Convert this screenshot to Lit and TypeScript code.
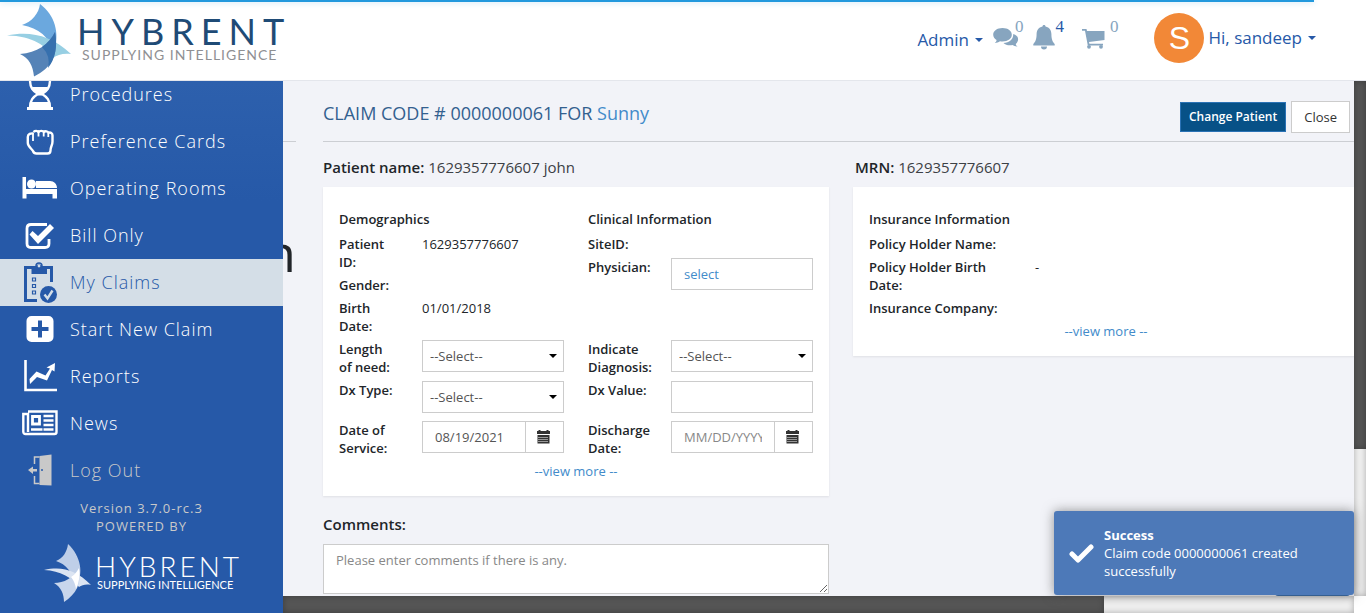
import { LitElement, html, css, svg, nothing } from "lit";
import { customElement, property } from "lit/decorators.js";
import { classMap } from "lit/directives/class-map.js";

const icons: Record<string, unknown> = {
  hourglass: svg`
    <path d="M7 2h26v3H7zM7 31h26v3H7z" fill="currentColor"/>
    <path d="M10 4c0 8 3 11 8 14c-5 3-8 6-8 14M30 4c0 8-3 11-8 14c5 3 8 6 8 14" fill="none" stroke="currentColor" stroke-width="2.400"/>
    <path d="M12 11h16c-1 3-3 5-6 6.500v2l-4 0v-2c-3-1.500-5-3.500-6-6.500zM11 26h18l2 6H9z" fill="currentColor"/>`,
  hand: svg`
    <path d="M13.500 9c1.500-1.500 4-1.500 5 0c1-1.500 4.500-1.500 5.500 0c1-1 4-1 4.500.8c2-.8 4 .4 4 2.700v6c0 4-2 5-2 9c0 2-1 3-3 3H16.500c-2 0-3-1-3.500-2.500c-1-2-5.200-4.500-5.200-8V14c0-3 3-4 5.700-3.500" fill="none" stroke="currentColor" stroke-width="2.400" stroke-linejoin="round"/>
    <path d="M13 10v8M18.500 9v4.500M23.700 9v4.500M28.300 10v4" fill="none" stroke="currentColor" stroke-width="1.800"/>`,
  bed: svg`
    <path d="M2.500 7h3.500v12h31v9.500h-4.500V24H6.500v4.500h-4zM16 11h14c4 0 7 3 7 7H16z" fill="currentColor"/>
    <circle cx="11.500" cy="14" r="4.500" fill="currentColor"/>`,
  check: svg`
    <path d="M27 7.500H11c-2.500 0-4 1.500-4 4v15c0 2.500 1.500 4 4 4h14c2.500 0 4-1.500 4-4V22" fill="none" stroke="currentColor" stroke-width="2.800"/>
    <path d="M9.500 17.500l3-3.500 5.500 5L30 7l4 4-16 16z" fill="currentColor"/>`,
  claims: svg`
    <path d="M31.500 20V5.500H5.500v33H17" fill="none" stroke="currentColor" stroke-width="3"/>
    <path d="M11.500 4h4.500a3.500 3.500 0 0 1 6 0h5v8H11.500z" fill="currentColor"/>
    <circle cx="19" cy="4" r="3" fill="none" stroke="currentColor" stroke-width="1.500"/>
    <circle cx="19" cy="4" r="1.400" fill="#d4dee7"/>
    <path d="M12.500 16h3v3h-3zM12.500 22.500h3v3h-3zM12.500 29h3v3h-3z" fill="none" stroke="currentColor" stroke-width="1.200"/>
    <circle cx="28.500" cy="32.500" r="8.500" fill="currentColor"/>
    <path d="M24.500 32.500l3 4 5-8" fill="none" stroke="#d4dee7" stroke-width="2.400"/>`,
  plus: svg`
    <path fill-rule="evenodd" d="M11.500 5h17a5 5 0 0 1 5 5v16a5 5 0 0 1-5 5h-17a5 5 0 0 1-5-5V10a5 5 0 0 1 5-5zM18 9.500V16h-6.500v4H18v6.500h4V20h6.500v-4H22V9.500z" fill="currentColor"/>`,
  chart: svg`
    <path d="M5.500 2v30H37" fill="none" stroke="currentColor" stroke-width="2.600"/>
    <path d="M9.500 21l7-7.500 9 4 4.500-7-3.500-1L35 5l-.500 8.500-2.500-1.500-5 10.500-10-3.500-7 7z" fill="currentColor"/>`,
  news: svg`
    <path d="M8 6.500h28.500V27a2 2 0 0 1-2 2H5.500a2.200 2.200 0 0 1-2.200-2V9H8v18" fill="none" stroke="currentColor" stroke-width="2.400"/>
    <path d="M12.500 11.500h7v7.500h-7z" fill="none" stroke="currentColor" stroke-width="2.800"/>
    <path d="M23.500 11h10M23.500 15.500h10M23.500 20h10M11 24.500h11.500M23.500 24.500h10" stroke="currentColor" stroke-width="2.400"/>`,
  door: svg`
    <path d="M19.500 4L31.500 2.500v31L19.500 33z" fill="currentColor"/>
    <path d="M19.500 5h-5v7M19.500 31.500h-5V24" fill="none" stroke="currentColor" stroke-width="1.500"/>
    <path d="M8 18l5-3.500V17h4v2.500h-4V22z" fill="currentColor"/>
    <circle cx="22" cy="18" r="1" fill="#265aa9"/>`,
};

const menu = [
  { label: "Procedures", icon: "hourglass" },
  { label: "Preference Cards", icon: "hand" },
  { label: "Operating Rooms", icon: "bed" },
  { label: "Bill Only", icon: "check" },
  { label: "My Claims", icon: "claims", active: true },
  { label: "Start New Claim", icon: "plus" },
  { label: "Reports", icon: "chart" },
  { label: "News", icon: "news" },
  { label: "Log Out", icon: "door", muted: true },
];

@customElement("hybrent-logo")
class HybrentLogo extends LitElement {
  @property({ type: Boolean }) light = false;

  static styles = css`
    :host { display: block; }
    svg { display: block; overflow: visible; }
    .name { font-family: Lato, sans-serif; font-size: 36px; letter-spacing: 7px; fill: #1f4b76; }
    .tag { font-family: Lato, sans-serif; font-size: 14px; letter-spacing: 1px; fill: #8f9093; }
    .name-light { font-family: Lato, sans-serif; font-size: 28px; font-weight: 300; letter-spacing: 3px; fill: #fff; }
    .tag-light { font-family: Lato, sans-serif; font-size: 11px; fill: #fff; }
  `;

  render() {
    if (this.light) {
      return html`<svg width="196" height="60" viewBox="0 0 196 60" role="img" aria-label="Hybrent">
        <path d="M24 0C37 12 40 30 32 42C29 29 22 20 12 17C19 14 23 8 24 0z" fill="#bfcfe8"/>
        <path d="M0 26C18 22 32 26 47 41C42 40 38 41 35 43C27 33 17 27 0 26z" fill="#dbe4f2"/>
        <path d="M10 39C20 39 29 34 35 24C38 40 32 50 20 58C20 50 17 43 10 39z" fill="#c8d6ec"/>
        <path d="M27 33Q32 30 35 24Q37 34 32 45Q31 38 27 33z" fill="#fff"/>
        <text class="name-light" x="51" y="33">HYBRENT</text>
        <text class="tag-light" x="53" y="45">SUPPLYING INTELLIGENCE</text>
      </svg>`;
    }
    return html`<svg width="283" height="80" viewBox="0 0 283 80" role="img" aria-label="Hybrent">
      <path d="M40 4C55 15 60 33 54 52C49 37 39 28 22 25C32 22 39 13 40 4z" fill="#6ba8de"/>
      <path d="M7 35.500C30 31 51 35 71 54C63 53 57 55 53 58C47 46 33 36 7 35.500z" fill="#97cfe3"/>
      <path d="M20 54C37 53 49 44 55 32C59 54 52 68 34 76.500C33 66 29 58 20 54z" fill="#5583b7"/>
      <path d="M42 47Q51 41 55 32Q59 54 48 68Q51 56 42 47z" fill="#3670ae"/>
      <text class="name" x="77" y="45">HYBRENT</text>
      <text class="tag" x="82" y="60">SUPPLYING INTELLIGENCE</text>
    </svg>`;
  }
}

@customElement("app-header")
class AppHeader extends LitElement {
  static styles = css`
    :host { display: block; position: relative; z-index: 3; background: #fff; border-bottom: 1px solid #e4e6ec; font-family: "Open Sans", sans-serif; }
    .progress { position: absolute; top: 0; left: 0; width: 96.2%; height: 2px; background: #2299dd; box-shadow: 0 0 6px rgba(34, 153, 221, .4); }
    .bar { display: flex; align-items: center; justify-content: space-between; height: 80px; padding-right: 50px; }
    .tools { display: flex; align-items: center; }
    button { display: flex; align-items: center; gap: 6px; border: 0; padding: 0; background: none; font: 17px/24px "Open Sans", sans-serif; color: #2659a8; }
    .caret { border: 4px solid transparent; border-top-color: #2659a8; border-bottom: 0; }
    .badge { display: flex; color: #87a5bf; text-decoration: none; font: 17px/20px "Liberation Serif", serif; }
    .badge svg { display: block; margin-top: 8px; overflow: visible; }
    .icons { display: flex; align-items: flex-start; gap: 10px; padding: 0 36px 12px 10px; }
    .new { color: #2659a8; }
    .new svg { color: #87a5bf; }
    .cart { padding-left: 8px; gap: 5px; }
    .user { gap: 4px; padding-bottom: 4px; }
    .user .caret { margin-left: 2px; }
    .avatar { display: grid; place-items: center; width: 50px; height: 50px; border-radius: 50%; background: #f28837; color: #fff; font: 32px/50px "Liberation Sans", sans-serif; }
  `;

  render() {
    return html`
      <div class="progress"></div>
      <div class="bar">
        <hybrent-logo></hybrent-logo>
        <div class="tools">
          <button type="button">Admin <span class="caret"></span></button>
          <div class="icons">
            <a class="badge" href="#" aria-label="Messages"><svg width="22" height="26" viewBox="0 0 22 26">
              <path d="M20.200 9c4 1 5.600 4 4.600 7c-.4 1.300-1.200 2.200-2 2.900c0 1 .8 1.900 1.700 2.600c-2 .1-3.700-.5-5-1.400c-4 .7-7-.2-9-2.100c6 0 10-3.800 9.700-9z" fill="currentColor"/>
              <path d="M9.500 3c5.500 0 9.300 2.900 9.300 6.700s-3.800 6.700-9.300 6.700c-.9 0-1.700-.1-2.500-.2c-1.500 1-3.300 1.700-5.200 1.700c1-.8 1.700-1.800 1.800-3C1.500 13.700.2 11.800.2 9.700C.2 5.900 4 3 9.500 3z" fill="currentColor"/>
            </svg>0</a>
            <a class="badge new" href="#" aria-label="Notifications"><svg width="22" height="26" viewBox="0 0 22 26">
              <path d="M11 0c1 0 1.500.7 1.500 1.500c4 .8 5.900 4 5.900 7.500c0 5.500 1.300 8 3.300 10v1.500H.3V19c2-2 3.300-4.500 3.300-10c0-3.500 1.900-6.700 5.900-7.500C9.500.7 10 0 11 0zM8 21.500h6a3 3 0 0 1-6 0z" fill="currentColor"/>
            </svg>4</a>
            <a class="badge cart" href="#" aria-label="Cart"><svg width="23" height="26" viewBox="0 0 23 26">
              <path d="M0 4h4.500l.5 2h17.500v9L7 17l.4 1.800H21v1.700H5.800L3 5.700H0z" fill="currentColor"/>
              <circle cx="7" cy="21.800" r="1.900" fill="currentColor"/><circle cx="19" cy="21.800" r="1.900" fill="currentColor"/>
            </svg>0</a>
          </div>
          <button type="button" class="user"><span class="avatar">S</span>Hi, sandeep <span class="caret"></span></button>
        </div>
      </div>`;
  }
}

@customElement("app-sidebar")
class AppSidebar extends LitElement {
  static styles = css`
    :host { display: block; position: relative; z-index: 2; overflow: hidden; background: linear-gradient(#2d60ad, #2659a8 120px); font-family: "Open Sans", sans-serif; letter-spacing: 1px; }
    nav { margin-top: -10px; }
    a { display: flex; align-items: center; gap: 10px; box-sizing: border-box; height: 47px; padding: 0 0 2px 20px; color: #fff; font-size: 18px; font-weight: 300; text-decoration: none; }
    svg { display: block; flex: none; width: 40px; height: 40px; overflow: visible; }
    .active { background: #d4dee7; color: #2659a8; }
    .muted, .foot { color: #c9c9c9; }
    .foot { display: flex; flex-direction: column; align-items: center; padding-top: 5px; font-size: 13px; line-height: 18px; }
    .foot hybrent-logo { padding-top: 9px; letter-spacing: 0; }
  `;

  render() {
    return html`
      <nav>
        ${menu.map((m) => html`<a href="#" class=${classMap({ active: !!m.active, muted: !!m.muted })}>
          <svg viewBox=${m.icon === "claims" ? "0 0 40 40" : "0 -2 40 40"}>${icons[m.icon]}</svg>${m.label}</a>`)}
      </nav>
      <div class="foot">
        <span>Version 3.7.0-rc.3</span>
        <span>POWERED BY</span>
        <hybrent-logo light></hybrent-logo>
      </div>`;
  }
}

@customElement("claim-panel")
class ClaimPanel extends LitElement {
  static styles = css`
    :host { display: block; position: relative; overflow: hidden; min-width: 0; background: #f2f3f8; color: #212529; font: 13px/18px "Open Sans", sans-serif; }
    * { box-sizing: border-box; }
    .under { position: absolute; top: 60px; left: 0; width: 13px; border-top: 1px solid #ccced3; }
    .letter { position: absolute; top: 135px; left: -19px; font-size: 52px; line-height: 72px; }
    .panel { padding-left: 40px; margin-right: -5px; }
    .head { display: flex; align-items: center; justify-content: space-between; height: 61px; padding: 12px 9px 0 0; border-bottom: 1px solid #ccced3; }
    h1 { margin: 0; padding-bottom: 8px; font-size: 18px; line-height: 24px; font-weight: 400; color: #33608f; }
    a { color: #428bca; text-decoration: none; }
    .actions { display: flex; align-items: center; gap: 5px; }
    button { font-family: inherit; font-size: 13px; line-height: 18px; }
    .primary { height: 30px; padding: 0 8px; border: 1px solid #2a72b5; background: #075187; color: #fff; font-size: 12px; font-weight: 600; }
    .close { height: 32px; padding: 0 12px; border: 1px solid #ccc; background: #fff; color: #333; }
    .cols { display: grid; grid-template-columns: 1fr 1fr; gap: 24px; align-items: start; }
    .who { margin: 0; padding: 14px 2px 9px 0; font-size: 15px; line-height: 22px; color: #3c4045; }
    .mrn { padding-left: 2px; }
    b { font-weight: 600; color: #212529; }
    .card { padding: 23px 16px 16px; background: #fff; box-shadow: 0 1px 2px rgba(0, 0, 0, .08); }
    .pair { display: grid; grid-template-columns: 1fr 1fr; column-gap: 24px; }
    .stack { display: grid; align-content: start; row-gap: 5px; padding-bottom: 5px; }
    h2 { margin: 0; padding-bottom: 2px; font-size: 13px; line-height: 18px; font-weight: 600; }
    .row { display: grid; grid-template-columns: 83px minmax(0, 1fr); }
    .wide .row { grid-template-columns: 35% 1fr; }
    .tall { min-height: 35px; }
    .name { padding-right: 23px; font-weight: 600; }
    .box, select, input, textarea { display: block; width: 100%; min-width: 0; height: 32px; margin: 0; border: 1px solid #ccc; border-radius: 0; background: #fff; color: #555; font: 13px/18px "Open Sans", sans-serif; }
    .box { padding: 6px 12px; }
    select { appearance: none; padding: 0 7px; }
    .pick { position: relative; }
    .pick::after { content: ""; position: absolute; right: 7px; top: 14px; border: 4px solid transparent; border-top: 4px solid #000; border-bottom: 0; pointer-events: none; }
    input { padding: 0 12px; }
    .date { display: grid; grid-template-columns: 1fr 38px; height: 32px; }
    .date button { display: grid; place-items: center; padding: 0 2px 0 0; border: 1px solid #ccc; border-left: 0; background: #fff; color: #333; }
    ::placeholder { color: #888; opacity: 1; }
    .more { display: block; text-align: center; }
    .comments { display: block; padding: 18px 0 9px; font-size: 15px; line-height: 21px; font-weight: 600; }
    textarea { height: 50px; padding: 6px 12px; resize: vertical; }
    .submit { position: absolute; right: 4px; bottom: 0; width: 75px; height: 30px; border-radius: 3px; background: #2c66aa; }
  `;

  private select(id: string) {
    return html`<div class="pick"><select id=${id}><option>--Select--</option></select></div>`;
  }

  private date(id: string, value: string) {
    return html`<div class="date"><input id=${id} .value=${value} placeholder="MM/DD/YYYY" />
      <button type="button" aria-label="Open calendar"><svg width="13" height="14" viewBox="0 0 13 14">
        <path d="M1.500 0h2v1h6V0h2v1H13v3H0V1h1.500z" fill="currentColor"/>
        <path d="M.5 5h12v8.500H.5z" fill="currentColor"/>
        <path d="M1.500 7.500h10M1.500 9.500h10M1.500 11.500h10" stroke="#fff" stroke-width="1" stroke-dasharray="1 1"/>
      </svg></button></div>`;
  }

  private row(name: string, value: unknown = nothing, id = "") {
    return html`<div class="row ${id === "dx" || id === "dxv" ? "tall" : ""}">
      ${id ? html`<label class="name" for=${id}>${name}</label>` : html`<span class="name">${name}</span>`}
      <div>${value}</div></div>`;
  }

  render() {
    return html`
      <div class="under"></div><div class="letter">n</div>
      <div class="submit"></div>
      <div class="panel">
        <div class="head">
          <h1>CLAIM CODE # 0000000061 FOR <a href="#">Sunny</a></h1>
          <div class="actions">
            <button type="button" class="primary">Change Patient</button>
            <button type="button" class="close">Close</button>
          </div>
        </div>
        <div class="cols">
          <section>
            <p class="who"><b>Patient name:</b> 1629357776607 john</p>
            <div class="card">
              <div class="pair">
                <div class="stack">
                  <h2>Demographics</h2>
                  ${this.row("Patient ID:", "1629357776607")}
                  ${this.row("Gender:")}
                  ${this.row("Birth Date:", "01/01/2018")}
                </div>
                <div class="stack">
                  <h2>Clinical Information</h2>
                  ${this.row("SiteID:")}
                  ${this.row("Physician:", html`<div class="box"><a href="#">select</a></div>`)}
                </div>
                <div class="stack">
                  ${this.row("Length of\u00a0need:", this.select("len"), "len")}
                  ${this.row("Dx Type:", this.select("dx"), "dx")}
                  ${this.row("Date of Service:", this.date("dos", "08/19/2021"), "dos")}
                </div>
                <div class="stack">
                  ${this.row("Indicate Diagnosis:", this.select("diag"), "diag")}
                  ${this.row("Dx Value:", html`<input id="dxv" />`, "dxv")}
                  ${this.row("Discharge Date:", this.date("dis", ""), "dis")}
                </div>
              </div>
              <a class="more" href="#">--view more --</a>
            </div>
            <label class="comments" for="comments">Comments:</label>
            <textarea id="comments" placeholder="Please enter comments if there is any."></textarea>
          </section>
          <section>
            <p class="who mrn"><b>MRN:</b> 1629357776607</p>
            <div class="card wide">
              <div class="stack">
                <h2>Insurance Information</h2>
                ${this.row("Policy Holder Name:")}
                ${this.row("Policy Holder Birth Date:", "-")}
                ${this.row("Insurance Company:")}
              </div>
              <a class="more" href="#">--view more --</a>
            </div>
          </section>
        </div>
      </div>`;
  }
}

@customElement("app-root")
class AppRoot extends LitElement {
  static styles = css`
    :host { display: flex; flex-direction: column; height: 100vh; overflow: hidden; position: relative; background: #fff; font-family: "Open Sans", sans-serif; }
    .body { flex: 1; min-height: 0; display: grid; grid-template-columns: 283px minmax(0, 1fr) 12px; grid-template-rows: minmax(0, 1fr) 17px; }
    app-sidebar { grid-row: 1 / 3; }
    .track-y, .track-x { background: #f0f0f0; box-shadow: inset 0 0 6px rgba(0, 0, 0, .3); }
    .thumb-y { height: 71.5%; background: #555; box-shadow: inset 0 0 6px rgba(0, 0, 0, .3); }
    .thumb-x { width: 76.7%; height: 100%; background: #555; box-shadow: inset 0 0 6px rgba(0, 0, 0, .3); }
    .toast { position: absolute; z-index: 5; right: 12px; bottom: 18px; display: flex; align-items: center; gap: 10px; box-sizing: border-box; width: 300px; padding: 15px; border-radius: 3px; background: #4d79b8; color: #fff; font-size: 13px; line-height: 18px; box-shadow: 0 0 12px rgba(80, 80, 80, .6); }
    .toast svg { flex: none; }
    .toast strong { display: block; }
  `;

  render() {
    return html`
      <app-header></app-header>
      <div class="body">
        <app-sidebar></app-sidebar>
        <claim-panel></claim-panel>
        <div class="track-y"><div class="thumb-y"></div></div>
        <div class="track-x"><div class="thumb-x"></div></div>
      </div>
      <div class="toast" role="status">
        <svg width="25" height="54" viewBox="0 0 25 54"><path d="M3 28l6 6L22 21" fill="none" stroke="#fff" stroke-width="5" stroke-linecap="round" stroke-linejoin="round"/></svg>
        <div><strong>Success</strong>Claim code 0000000061 created successfully</div>
      </div>`;
  }
}
